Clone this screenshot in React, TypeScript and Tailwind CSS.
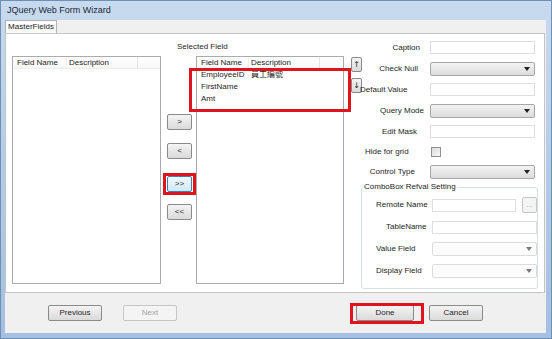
import React from 'react';

const font = "font-['Liberation_Sans','Noto_Sans_CJK_TC',sans-serif]";

function Btn({ label, className = '', disabled = false, focused = false }: { label: string; className?: string; disabled?: boolean; focused?: boolean }) {
  const look = disabled
    ? 'border-[#c6c6c6] bg-[#f4f4f4] text-[#a3a3a3]'
    : focused
    ? 'border-[#3c7fb1] bg-gradient-to-b from-[#f2f9fe] to-[#cfe9fa] text-[#1e1e1e]'
    : 'border-[#8a8a8a] bg-gradient-to-b from-[#f4f4f4] to-[#dadada] text-[#1e1e1e]';
  return (
    <div className={`flex items-center justify-center rounded-[2px] border text-[8px] leading-none ${look} ${className}`}>
      {label}
    </div>
  );
}

function Input({ className = '' }: { className?: string }) {
  return <div className={`h-[13px] border border-[#dedede] bg-white ${className}`} />;
}

function Select({ disabled = false, className = 'w-[105px]' }: { disabled?: boolean; className?: string }) {
  return (
    <div
      className={`flex h-[14px] items-center justify-end rounded-[2px] border pr-[4px] ${
        disabled ? 'border-[#dcdcdc] bg-[#fcfcfc]' : 'border-[#a7a7a7] bg-gradient-to-b from-[#f3f3f3] to-[#dcdcdc]'
      } ${className}`}
    >
      <svg width="6" height="4" viewBox="0 0 6 4">
        <path d="M0 0h6L3 4z" fill={disabled ? '#7a7a7a' : '#222'} />
      </svg>
    </div>
  );
}

function FormRow({ label, pad, h = 'h-[21px]', children }: { label: string; pad: string; h?: string; children: React.ReactNode }) {
  return (
    <div className={`flex items-center ${h}`}>
      <div className={`w-[67px] shrink-0 whitespace-nowrap ${pad}`}>{label}</div>
      {children}
    </div>
  );
}

function ListHeader({ c1, c2 }: { c1: string; c2: string }) {
  return (
    <div className="flex h-[12px] items-center border-b border-[#ececec] bg-gradient-to-b from-white to-[#f7f7f7] text-[8px]">
      <div className={`${c1} h-full border-r border-[#f0f0f0] pl-[4px] leading-[12px]`}>Field Name</div>
      <div className={`${c2} h-full border-r border-[#e4e4e4] pl-[2px] leading-[12px]`}>Description</div>
    </div>
  );
}

export default function App() {
  return (
    <div className={`relative flex h-[339px] w-[552px] flex-col overflow-hidden border border-[#6f8fb5] bg-gradient-to-b from-[#c8daef] via-[#b3cbe8] to-[#a4bfe0] px-[4px] pb-[5px] pr-[5px] text-[#1e1e1e] ${font}`}>
      {/* title bar */}
      <div className="flex h-[19px] shrink-0 items-center pl-[2px] text-[9px] text-[#1b2838]">JQuery Web Form Wizard</div>

      <div className="flex flex-1 flex-col bg-[#f0f0f0]">
        {/* tab strip */}
        <div className="flex h-[13px] shrink-0 items-end">
          <div className="flex h-[13px] w-[52px] items-center justify-center border-x border-t border-[#b4b4b4] bg-[#fbfbfb] text-[8px]">
            MasterFields
          </div>
        </div>

        {/* white panel */}
        <div className="mr-[1px] flex h-[260px] shrink-0 items-start border border-[#c4c4c4] bg-white text-[8px]">
          {/* source list */}
          <div className="ml-[6px] mt-[22px] h-[228px] w-[149px] shrink-0 border border-[#a9abb0]">
            <ListHeader c1="w-[54px]" c2="w-[71px]" />
          </div>

          {/* middle block */}
          <div className="flex flex-col pt-[8px]">
            <div className="ml-[16px] h-[10px] leading-[10px]">Selected Field</div>
            <div className="mt-[4px] flex">
              <div className="flex w-[35px] flex-col pl-[6px]">
                <Btn label=">" className="mt-[58px] h-[16px] w-[25px]" />
                <Btn label="<" className="mt-[13px] h-[16px] w-[25px]" />
                <Btn label=">>" focused className="mt-[17px] h-[16px] w-[25px]" />
                <Btn label="<<" className="mt-[12px] h-[16px] w-[25px]" />
              </div>
              <div className="h-[228px] w-[148px] border border-[#a9abb0]">
                <ListHeader c1="w-[52px]" c2="w-[71px]" />
                {[
                  ['EmployeeID', '員工編號'],
                  ['FirstName', ''],
                  ['Amt', ''],
                ].map(([a, b]) => (
                  <div key={a} className="flex h-[12px] items-center">
                    <div className="w-[52px] pl-[4px]">{a}</div>
                    <div className="pl-[2px]">{b}</div>
                  </div>
                ))}
              </div>
            </div>
          </div>

          {/* up / down */}
          <div className="flex w-[19px] flex-col pl-[7px] pt-[23px] font-['DejaVu_Sans',sans-serif]">
            <Btn label="↑" className="h-[15px] w-[11px]" />
            <Btn label="↓" className="mt-[6px] h-[15px] w-[11px]" />
          </div>

          {/* property form */}
          <div className="flex w-[177px] flex-col pt-[3px]">
            <FormRow label="Caption" pad="text-right pr-[10px]">
              <Input className="w-[105px]" />
            </FormRow>
            <FormRow label="Check Null" pad="text-right pr-[12px]">
              <Select />
            </FormRow>
            <FormRow label="Default Value" pad="-ml-[4px] pl-[1px]">
              <Input className="ml-[4px] w-[105px]" />
            </FormRow>
            <FormRow label="Query Mode" pad="text-right pr-[6px]">
              <Select />
            </FormRow>
            <FormRow label="Edit Mask" pad="text-right pr-[13px]">
              <Input className="w-[105px]" />
            </FormRow>
            <FormRow label="Hide for grid" pad="pl-[2px]" h="h-[19px]">
              <div className="ml-[1px] h-[10px] w-[10px] border border-[#8e8f8f] bg-gradient-to-br from-[#dcdcdc] to-[#f6f6f6]" />
            </FormRow>
            <FormRow label="Control Type" pad="text-right pr-[15px]">
              <Select />
            </FormRow>

            {/* group box */}
            <div className="relative -ml-[2px] mt-[5px] h-[102px] w-[177px] rounded-[3px] border border-[#d5dfe5] pl-[14px] pt-[6px]">
              <div className="absolute -top-[6px] left-[1px] bg-white px-[1px] leading-[10px]">ComboBox Refval Setting</div>
              <div className="flex h-[22px] items-center">
                <div className="w-[56px] shrink-0">Remote Name</div>
                <Input className="h-[12px] w-[84px]" />
                <Btn label="..." disabled className="ml-[6px] h-[16px] w-[15px]" />
              </div>
              <div className="flex h-[22px] items-center">
                <div className="w-[56px] shrink-0 pl-[10px]">TableName</div>
                <Input className="w-[105px]" />
              </div>
              <div className="flex h-[22px] items-center">
                <div className="w-[56px] shrink-0">Value Field</div>
                <Select disabled />
              </div>
              <div className="flex h-[22px] items-center">
                <div className="w-[56px] shrink-0">Display Field</div>
                <Select disabled />
              </div>
            </div>
          </div>
        </div>

        {/* bottom buttons */}
        <div className="flex flex-1 items-center">
          <Btn label="Previous" className="ml-[43px] h-[16px] w-[54px]" />
          <Btn label="Next" disabled className="ml-[21px] h-[16px] w-[54px]" />
          <Btn label="Done" className="ml-[179px] h-[16px] w-[58px]" />
          <Btn label="Cancel" className="ml-[15px] h-[16px] w-[54px]" />
        </div>
      </div>

      {/* red annotation boxes */}
      <div className="pointer-events-none absolute left-[188px] top-[67px] h-[44px] w-[162px] border-[3px] border-[#e0141e]" />
      <div className="pointer-events-none absolute left-[162px] top-[172px] h-[22px] w-[33px] border-[3px] border-[#e0141e]" />
      <div className="pointer-events-none absolute left-[349px] top-[302px] h-[21px] w-[74px] border-[3px] border-[#e0141e]" />
    </div>
  );
}
